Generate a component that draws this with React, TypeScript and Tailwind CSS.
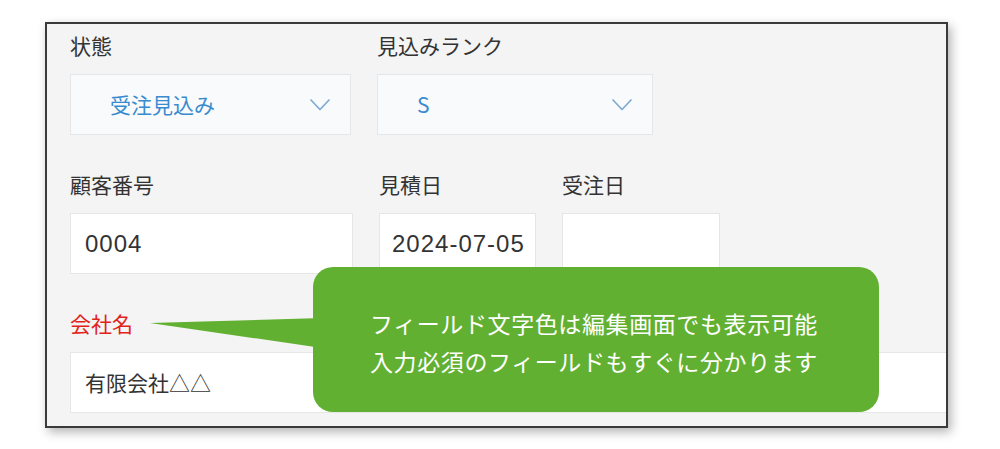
import React from "react";

function Chevron() {
  return (
    <svg width="20" height="12" viewBox="0 0 20 12" fill="none">
      <polyline
        points="1,1 10,10.5 19,1"
        stroke="#7eaad3"
        strokeWidth="1.7"
        strokeLinecap="round"
        strokeLinejoin="round"
      />
    </svg>
  );
}

function Label({ text, red }: { text: string; red?: boolean }) {
  return (
    <div
      className={`h-[30px] leading-[30px] text-[21px] font-['Noto_Sans_CJK_JP',sans-serif] ${
        red ? "text-[#e2231a]" : "text-[#333333]"
      }`}
    >
      {text}
    </div>
  );
}

function SelectBox({ value, width }: { value: string; width: string }) {
  return (
    <div
      className={`${width} mt-[14px] h-[61px] flex items-center justify-between pl-[39px] pr-[20px] bg-[#f8fafc] border border-[#e4e7ea] text-[#3a8bce] text-[21px] font-['Noto_Sans_CJK_JP',sans-serif]`}
    >
      <span>{value}</span>
      <Chevron />
    </div>
  );
}

export default function App() {
  return (
    <div className="relative w-[1000px] h-[449px] bg-white overflow-hidden">
      <div className="pt-[22px] pl-[45px]">
        <div className="w-[903px] h-[406px] border-2 border-[#3a3a3a] bg-[#f4f4f4] shadow-[3px_4px_10px_rgba(0,0,0,0.3)] overflow-hidden pt-[6px] pl-[23px]">
          {/* row 1 */}
          <div className="flex gap-[26px]">
            <div>
              <Label text="状態" />
              <SelectBox value="受注見込み" width="w-[281px]" />
            </div>
            <div>
              <Label text="見込みランク" />
              <SelectBox value="S" width="w-[276px]" />
            </div>
          </div>

          {/* row 2 */}
          <div className="flex gap-[26px] mt-[34px]">
            <div>
              <Label text="顧客番号" />
              <div className="w-[283px] mt-[14px] h-[61px] flex items-center pl-[14px] bg-white border border-[#e6e6e6] text-[#333333] text-[24px] tracking-[1px] font-['Liberation_Sans',sans-serif]">
                0004
              </div>
            </div>
            <div>
              <Label text="見積日" />
              <div className="w-[157px] mt-[14px] h-[61px] flex items-center pl-[12px] bg-white border border-[#e6e6e6] text-[#333333] text-[24px] tracking-[1px] font-['Liberation_Sans',sans-serif]">
                2024-07-05
              </div>
            </div>
            <div>
              <Label text="受注日" />
              <div className="w-[158px] mt-[14px] h-[61px] bg-white border border-[#e6e6e6]" />
            </div>
          </div>

          {/* row 3 */}
          <div className="mt-[34px]">
            <Label text="会社名" red />
            <div className="mt-[14px] h-[61px] flex items-center pl-[14px] bg-white border border-[#e6e6e6] border-r-0 text-[#333333] text-[21px] font-['Noto_Sans_CJK_JP',sans-serif]">
              有限会社△△
            </div>
          </div>
        </div>
      </div>

      {/* callout */}
      <svg
        className="absolute left-[150px] top-[315px]"
        width="172"
        height="36"
        viewBox="0 0 172 36"
      >
        <polygon points="0,8 172,3 172,33" fill="#62b032" />
      </svg>
      <div className="absolute left-[313px] top-[267px] w-[566px] h-[145px] rounded-[20px] bg-[#62b032] pt-[37px] pl-[57px] text-white text-[23px] leading-[38px] tracking-[0.6px] font-['Noto_Sans_CJK_JP',sans-serif]">
        <div>フィールド文字色は編集画面でも表示可能</div>
        <div>入力必須のフィールドもすぐに分かります</div>
      </div>
    </div>
  );
}
